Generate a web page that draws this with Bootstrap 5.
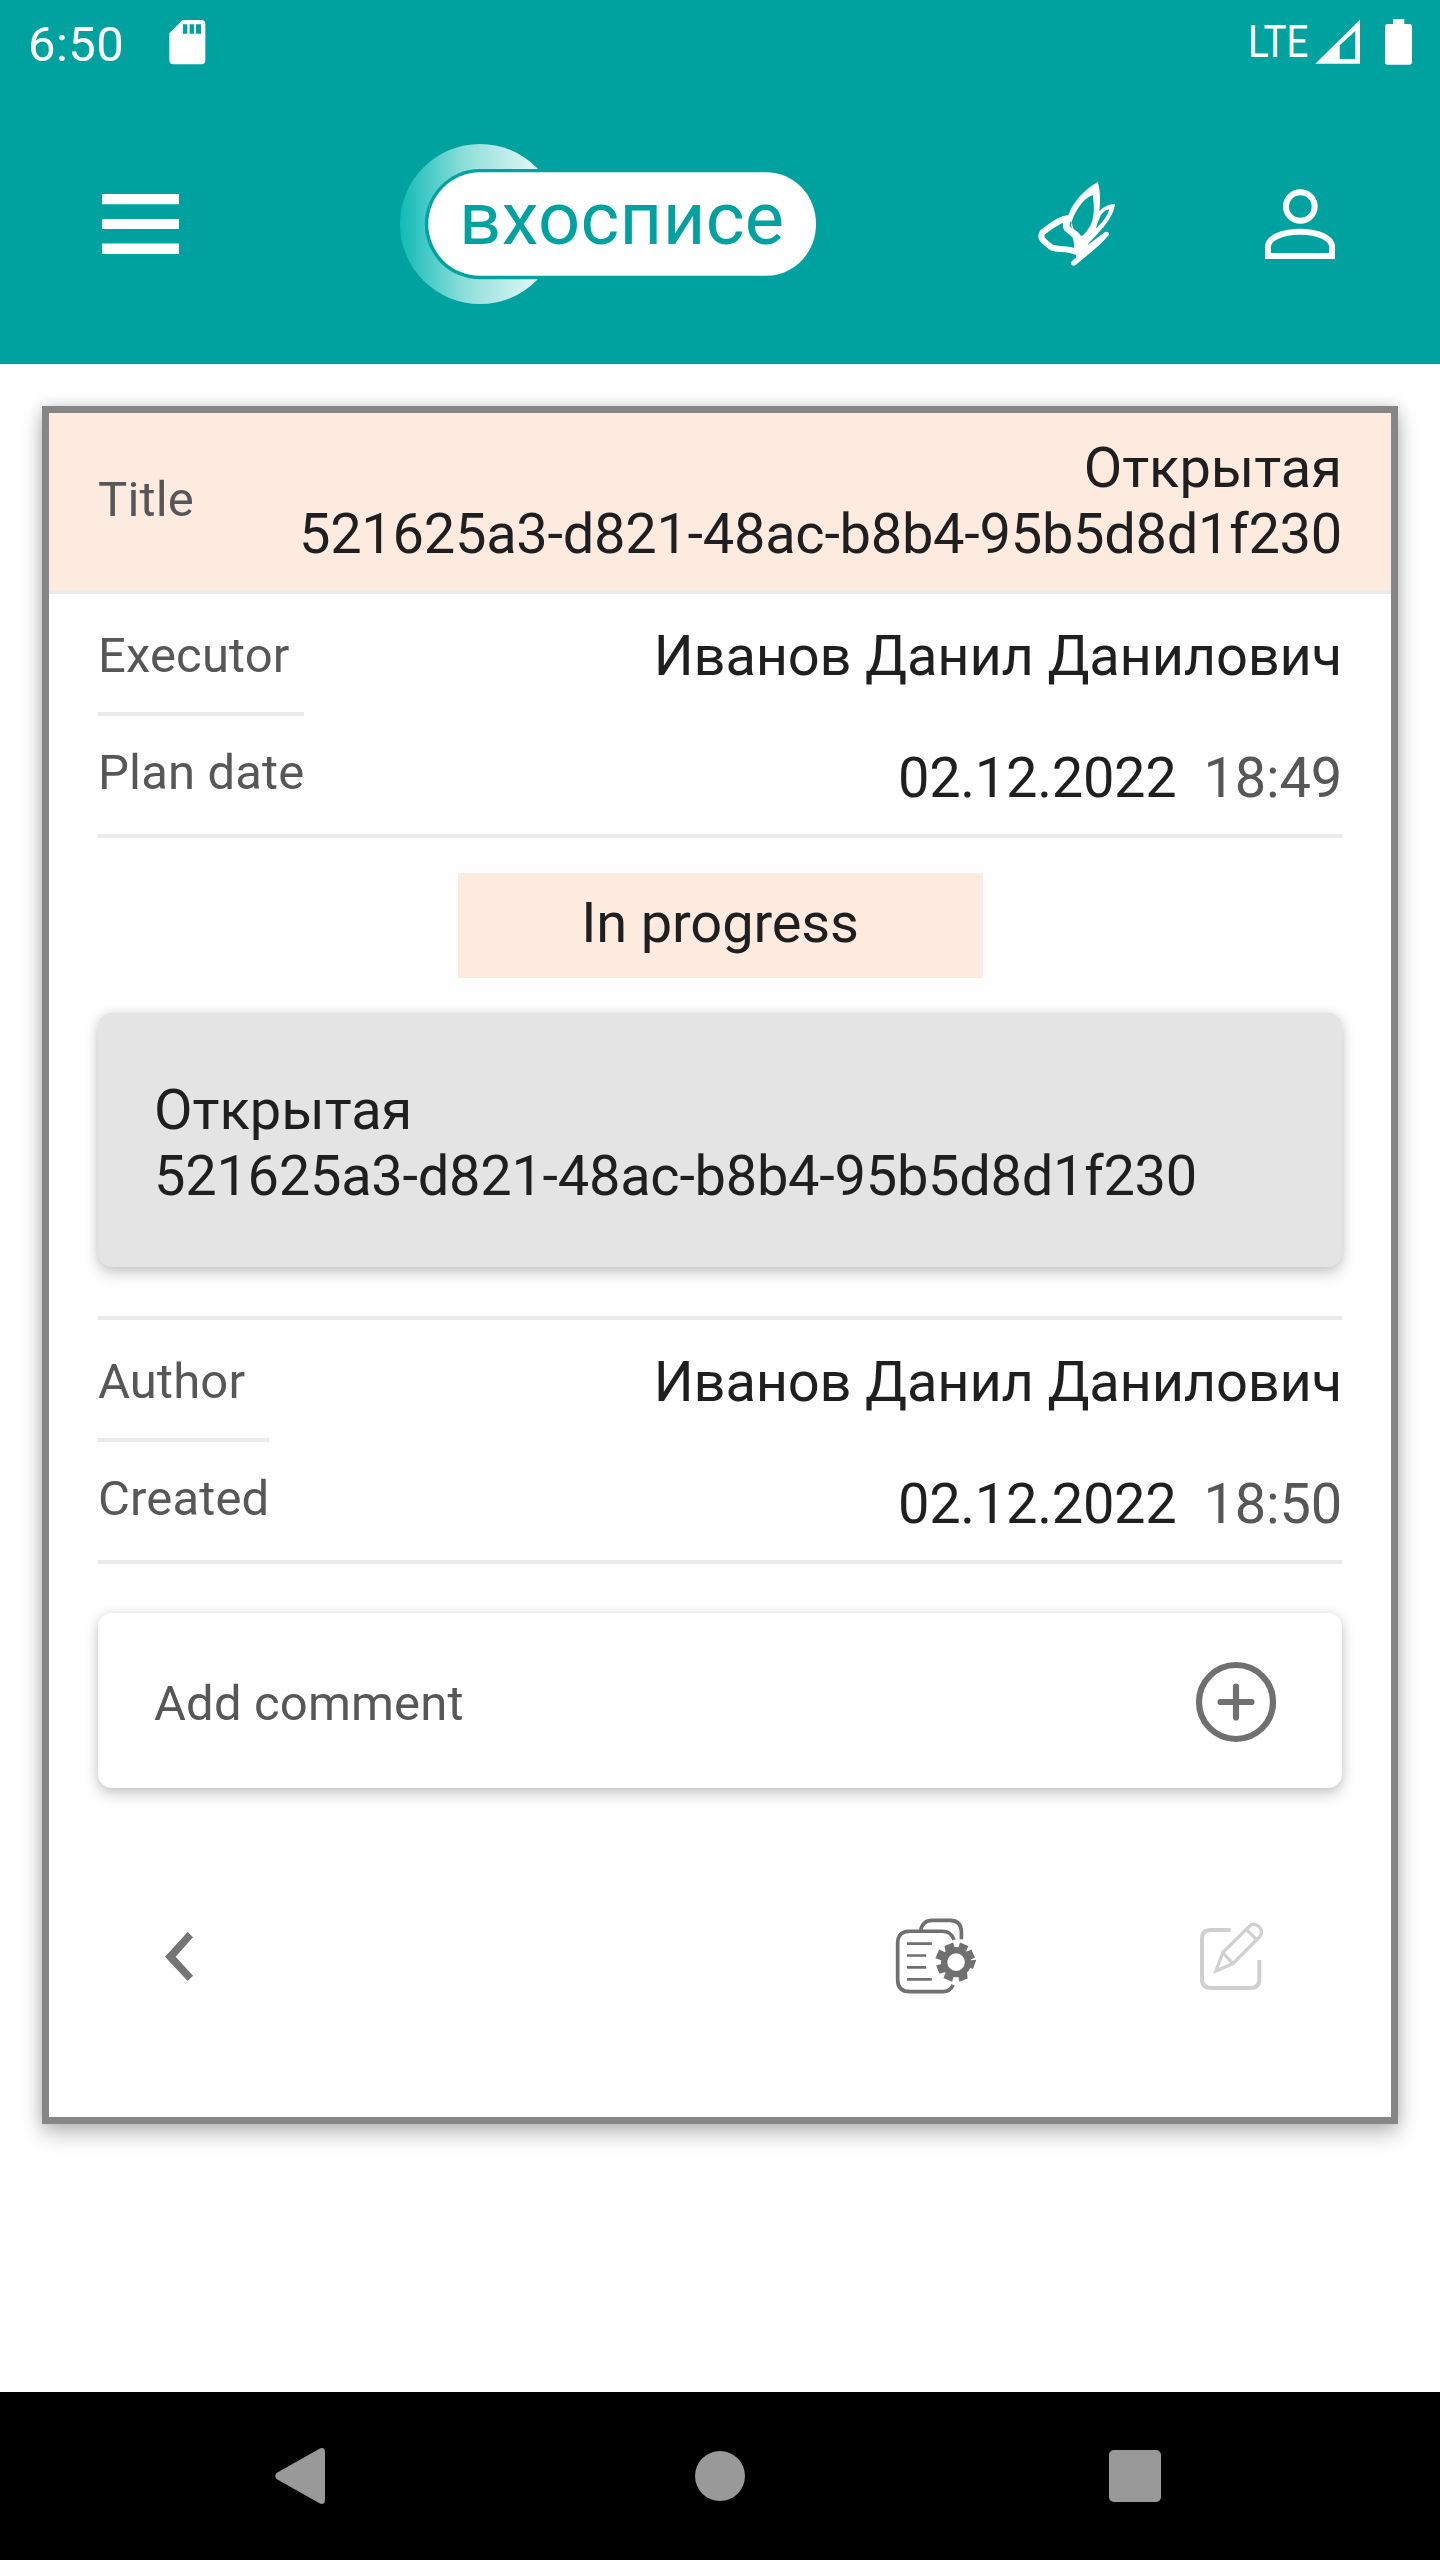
<!DOCTYPE html>
<html lang="ru">
<head>
<meta charset="utf-8">
<meta name="viewport" content="width=device-width, initial-scale=1">
<title>вхосписе</title>
<link href="https://cdn.jsdelivr.net/npm/bootstrap@5.3.0/dist/css/bootstrap.min.css" rel="stylesheet">
<style>
  body { font-family: Roboto, "Noto Sans", sans-serif; color: #1f1f1f; background: #fff; }
  svg { display: block; flex: none; }
  .screen { width: 1440px; height: 2560px; overflow: hidden; }
  .teal-top { background: #00a2a0; height: 364px; }
  .status-strip { height: 84px; }
  .clock { font-size: 49px; line-height: 58px; letter-spacing: .4px; padding: 16px 0 0 28px; width: 169px; }
  .toolbar-strip { height: 280px; padding-left: 102px; }
  .logo-gap { margin-left: 221px; }
  .leaf-gap { margin-left: 222px; }
  .user-gap { margin-left: 150px; }
  .claim { margin: 42px 42px 0; height: 1718px; border: 7px solid #868686; background: #fefefe;
           box-shadow: 0 10px 21px rgba(0,0,0,.24), 0 0 14px rgba(0,0,0,.15); }
  .claim-title { height: 181px; padding: 22px 49px 0; background: #feebe0; border-bottom: 4px solid #eaebea; }
  .claim-title .lbl { padding-top: 36px; }
  .claim-inner { padding: 0 49px; }
  .lbl { font-size: 49px; line-height: 58px; letter-spacing: .15px; color: #575757; white-space: nowrap; }
  .val { font-size: 56px; line-height: 66px; white-space: nowrap; }
  .tight { letter-spacing: -.28px; }
  .tight-name { letter-spacing: -.19px; }
  .dim { color: #575757; }
  .rule { height: 4px; background: #eaeaea; }
  .facts { height: 240px; }
  .facts-l { padding-top: 33px; }
  .facts-l .rule { margin: 27px 0 28px; }
  .facts-r { padding-top: 29px; gap: 56px; }
  .date-gap { gap: 27px; }
  .state { width: 525px; height: 105px; margin: 35px auto; padding-top: 17px; letter-spacing: -.15px; background: #feebe0; }
  .panel { border-radius: 14px; padding: 0 56px; box-shadow: 0 7px 14px rgba(0,0,0,.17), 0 0 11px rgba(0,0,0,.1); }
  .descr { height: 254px; padding-top: 64px; margin-bottom: 49px; background: #e4e4e4; }
  .remark { height: 175px; margin-top: 49px; padding: 2px 65px 0 56px; background: #fff; }
  .remark .lbl { padding-top: 5px; }
  .actions { height: 100px; margin-top: 118px; padding-left: 67px; }
  .proc-gap { margin-left: 702px; }
  .edit-gap { margin-left: 223px; }
  .sysnav { height: 168px; padding: 0 279px 0 275px; background: #000; }
  .home-dot { margin-left: 5px; }
</style>
</head>
<body>
<div class="screen d-flex flex-column">
  <header class="teal-top text-white">
    <div class="status-strip d-flex">
      <div class="clock">6:50</div>
      <svg width="37" height="84" viewBox="507 0 111 252"><path fill="#fff" fill-rule="evenodd" d="M548 60H604Q616 60 616 72V181Q616 193 604 193H520Q508 193 508 181V100ZM549 73V101H562V73ZM569 73V101H582V73ZM588 73V101H603V73Z"/></svg>
      <svg class="ms-auto" width="210" height="84" viewBox="1230 0 210 84" fill="#fff">
        <text x="1248" y="57" font-size="43.5" textLength="60.500" lengthAdjust="spacingAndGlyphs">LTE</text>
        <path fill-rule="evenodd" d="M1315.300 63.700L1360 19.700V63.700ZM1339.700 45.300V59H1355.300V31Z"/>
        <path d="M1393 19h11.300v5h5q2.700 0 2.700 2.700v35.300q0 2.700-2.700 2.700h-21.600q-2.700 0-2.700-2.700v-35.300q0-2.700 2.700-2.700h5.300z"/>
      </svg>
    </div>
    <nav class="toolbar-strip d-flex align-items-center">
      <svg width="77" height="60" viewBox="0 0 77 60" fill="#fff"><path d="M0 0h77v10.300H0zM0 25h77v10H0zM0 49.600h77V60H0z"/></svg>
      <svg class="logo-gap" width="416" height="160" viewBox="400 144 416 160">
        <defs><linearGradient id="halo" gradientUnits="userSpaceOnUse" x1="400" x2="540" y1="0" y2="0">
          <stop offset="0" stop-color="#10bbb7"/><stop offset=".45" stop-color="#8bdeda"/><stop offset="1" stop-color="#e4f7f7"/></linearGradient></defs>
        <circle cx="480" cy="224" r="80" fill="url(#halo)"/>
        <path fill="#00a2a0" d="M480 169H600V279.300H480A55.100 55.100 0 0 1 480 169Z"/>
        <path fill="#fff" d="M480 172.300H766C794 172.300 816 195 816 224S794 275.800 766 275.800H480A51.700 51.700 0 0 1 480 172.300Z"/>
        <text x="459" y="244" font-size="74" fill="#00a2a0" textLength="325" lengthAdjust="spacing">вхосписе</text>
      </svg>
      <svg class="leaf-gap" width="77" height="84" viewBox="114 546 231 252" fill="none" stroke="#fff" stroke-width="18">
        <path d="M210 654C180 655 150 680 128 697Q120 708 128 719Q141 733 156 743C175 750 205 742 232 757"/>
        <path d="M206 650C196 674 196 683 208 691C226 702 234 712 232 752" stroke-width="20"/>
        <path fill="#fff" stroke="none" fill-rule="evenodd" d="M203 650C219 605 252 569 294 546C301 575 302 605 298 634Q316 613 345 612C343 648 305 690 266 730L238 735L215 670ZM213 674C221 640 245 598 278 585C284 620 283 650 272 675Q262 694 245 711Q238 698 222 688Q213 684 213 674ZM298 656C290 676 289 682 286 688C304 670 323 649 328 628C313 632 302 642 298 656Z"/>
        <path fill="#fff" stroke="none" d="M228 715L262 700L290 683L263 735L315 696Q328 693 327 704C300 738 255 770 226 796Q215 800 212 789Q214 783 228 773Z"/>
      </svg>
      <svg class="user-gap" width="70" height="70" viewBox="795 567 210 210" fill="none" stroke="#fff" stroke-width="18"><circle cx="901" cy="619.500" r="43"/><path d="M804 768V740C804 715 845 695 900 695S996 715 996 740V768Z"/></svg>
    </nav>
  </header>

  <main class="flex-grow-1">
    <section class="claim">
      <div class="claim-title d-flex justify-content-between">
        <div class="lbl">Title</div>
        <div class="val text-end">Открытая<br><span class="tight">521625a3-d821-48ac-b8b4-95b5d8d1f230</span></div>
      </div>
      <div class="claim-inner">
        <div class="facts d-flex justify-content-between">
          <div class="facts-l d-flex flex-column">
            <div class="lbl">Executor</div><div class="rule"></div><div class="lbl">Plan date</div>
          </div>
          <div class="facts-r d-flex flex-column align-items-end">
            <div class="val tight-name">Иванов Данил Данилович</div>
            <div class="val d-flex date-gap"><span class="tight">02.12.2022</span><span class="dim tight-name">18:49</span></div>
          </div>
        </div>
        <div class="rule"></div>
        <div class="state val text-center">In progress</div>
        <div class="panel descr val">Открытая<br><span class="tight">521625a3-d821-48ac-b8b4-95b5d8d1f230</span></div>
        <div class="rule"></div>
        <div class="facts d-flex justify-content-between">
          <div class="facts-l d-flex flex-column">
            <div class="lbl">Author</div><div class="rule"></div><div class="lbl">Created</div>
          </div>
          <div class="facts-r d-flex flex-column align-items-end">
            <div class="val tight-name">Иванов Данил Данилович</div>
            <div class="val d-flex date-gap"><span class="tight">02.12.2022</span><span class="dim tight-name">18:50</span></div>
          </div>
        </div>
        <div class="rule"></div>
        <div class="panel remark d-flex align-items-center justify-content-between">
          <div class="lbl">Add comment</div>
          <svg width="82" height="82" viewBox="-41 -41 82 82" fill="none" stroke="#707070" stroke-width="6.200"><circle r="37"/><path stroke-linecap="round" d="M-15.500 0H15.500M0-15.500V15.500"/></svg>
        </div>
        <div class="actions d-flex align-items-center">
          <svg width="28" height="49" viewBox="495 156 84 147"><path fill="#757575" d="M563 156L579 172L527 230L579 287L563 303L495 230Z"/></svg>
          <svg class="proc-gap" width="82" height="76" viewBox="107 87 245 229" fill="none" stroke="#707070" stroke-width="11">
            <path d="M183 127Q188 94 218 94H272Q306 94 306 130V151"/>
            <path d="M284 153Q275 127 248 127H150Q114 127 114 163V273Q114 309 150 309H250Q272 309 281 289"/>
            <path stroke-width="8" d="M142 164H217M142 200H200M142 236H200M142 272H217"/>
            <circle cx="290" cy="220" r="36" stroke-width="19"/>
            <path fill="#707070" stroke="none" d="M297 175L302 161L327 171L321 186ZM322 189L336 182L347 207L332 213ZM323 251L317 247L297 264L300 279L325 269ZM282 265L278 279L252 268L258 253ZM257 250L240 255L230 230L248 225ZM247 215L228 208L239 182L257 190ZM258 187L255 171L281 161L286 177ZM335 214L351 213L341 241L325 234Z"/>
          </svg>
          <svg class="edit-gap" width="64" height="68.300" viewBox="1019 95 192 205" fill="none" stroke="#d0d0d0" stroke-width="12">
            <path d="M1111 119H1051Q1025 119 1025 145V267Q1025 293 1051 293H1171Q1197 293 1197 267V209"/>
            <path stroke-width="10" d="M1087 187L1168 107Q1181 96 1196 109Q1210 123 1199 138L1118 220L1067 242ZM1087 187L1118 220M1158 117L1189 148"/>
          </svg>
        </div>
      </div>
    </section>
  </main>

  <footer class="sysnav d-flex align-items-center justify-content-between">
    <svg width="50" height="56" viewBox="0 0 50 56" fill="#999"><path d="M1.500 25L44 1Q50-2 50 5V51Q50 58 44 55L1.500 31Q-1 28 1.500 25Z"/></svg>
    <svg class="home-dot" width="50" height="50" viewBox="0 0 50 50" fill="#999"><circle cx="25" cy="25" r="25"/></svg>
    <svg width="52" height="52" viewBox="0 0 52 52" fill="#999"><rect width="52" height="52" rx="5"/></svg>
  </footer>
</div>
<script src="https://cdn.jsdelivr.net/npm/bootstrap@5.3.0/dist/js/bootstrap.bundle.min.js"></script>
</body>
</html>
